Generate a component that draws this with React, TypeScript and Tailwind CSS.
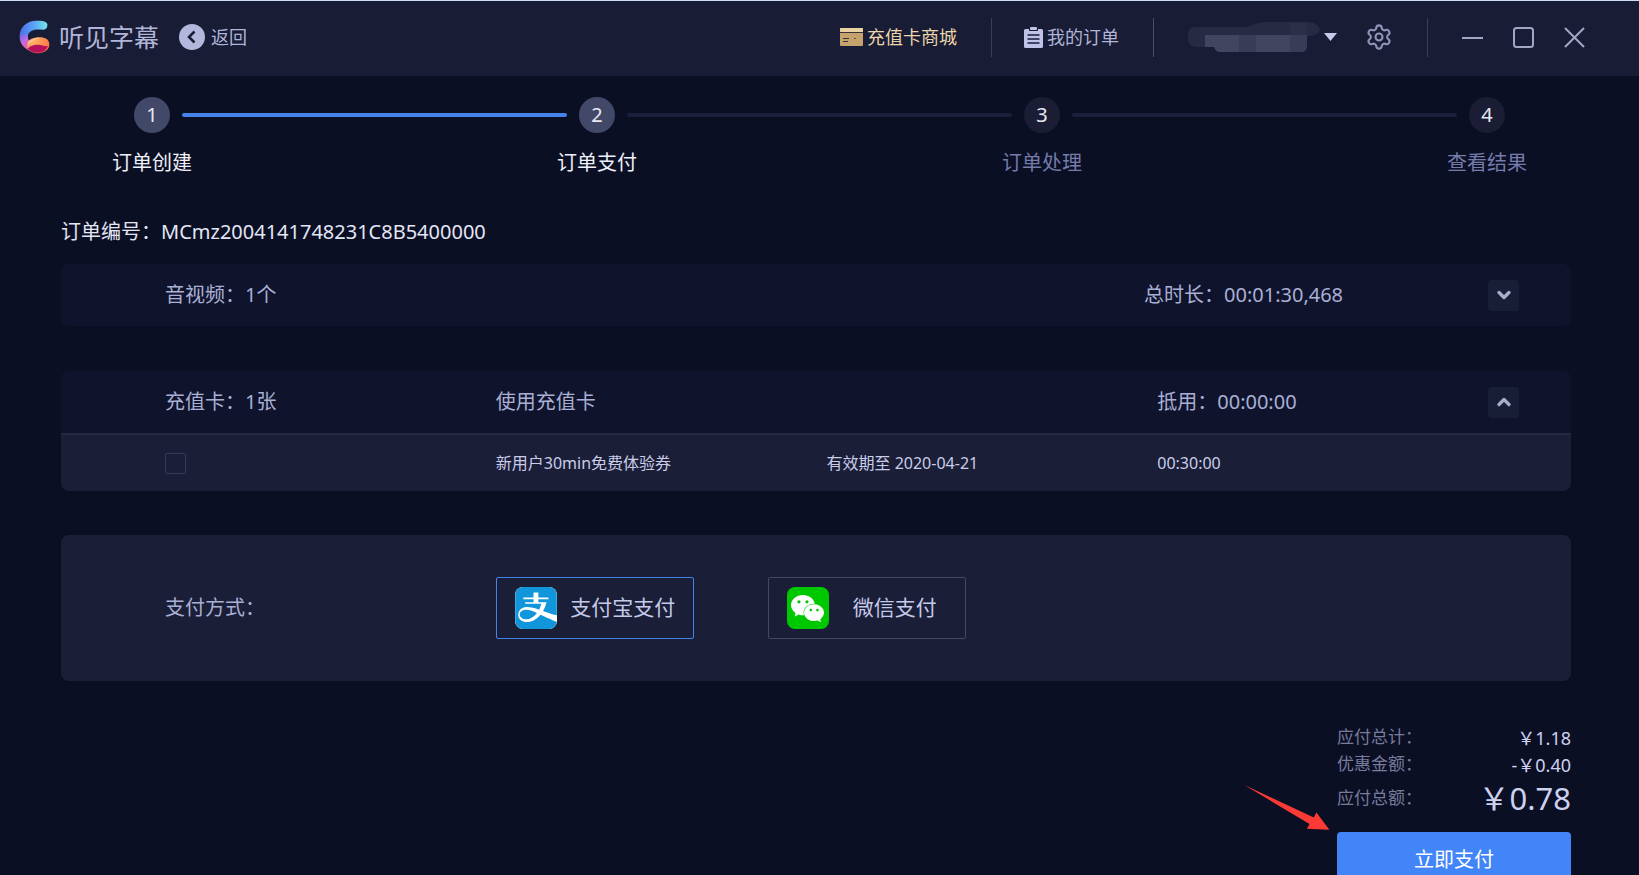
import { useState } from 'react';
import { ChevronDown, ChevronUp, Settings } from 'lucide-react';
import { SiAlipay, SiWechat } from 'react-icons/si';

const steps = [
    { label: '订单创建', active: true },
    { label: '订单支付', active: true },
    { label: '订单处理', active: false },
    { label: '查看结果', active: false },
];

function Logo() {
    return (
        <svg viewBox="56 54 94 102" className="h-[34px] w-[31px]" aria-hidden="true">
            <defs>
                <linearGradient id="logoTop" x1="0" y1="0" x2="1" y2="0">
                    <stop offset="0" stopColor="#4a6fe6" />
                    <stop offset="0.5" stopColor="#5aa0f5" />
                    <stop offset="1" stopColor="#74e8ea" />
                </linearGradient>
                <linearGradient id="logoLeft" x1="0" y1="0" x2="0.4" y2="1">
                    <stop offset="0" stopColor="#a05fe0" stopOpacity="0" />
                    <stop offset="0.5" stopColor="#c26ae0" />
                    <stop offset="1" stopColor="#f05aa8" />
                </linearGradient>
                <linearGradient id="logoRing" x1="0" y1="0" x2="1" y2="0.3">
                    <stop offset="0" stopColor="#f46a9c" />
                    <stop offset="0.35" stopColor="#ffae62" />
                    <stop offset="1" stopColor="#ff7a4a" />
                </linearGradient>
            </defs>
            <path d="M133 58c7 2 10 7 9 13-1 9-7 13-15 12-18-3-36 0-43 13-3 7-1 17 3 24l-2 24c-17-9-27-23-27-41 0-29 23-47 50-47 9 0 18 0 25 2z" fill="url(#logoTop)" />
            <path d="M66 92c4 4 12 6 17 8-1 8 2 15 5 20l4 28c-20-7-32-22-34-40 0-6 3-12 8-16z" fill="url(#logoLeft)" />
            <path d="M80 124c4-12 22-19 42-18 16 1 26 9 26 21 0 17-17 28-37 27-20-1-36-14-31-30z" fill="url(#logoRing)" />
            <path d="M82 141c8-12 24-14 38-12 10 2 18 4 24 4-6 14-20 21-34 20-12 0-22-5-28-12z" fill="#b80f5c" />
            <path d="M84 120c8-10 24-13 37-12-10 3-28 8-38 22z" fill="#ffc983" />
        </svg>
    );
}

function CardIcon() {
    return (
        <svg viewBox="0 0 23 18" className="h-[18px] w-[23px]" aria-hidden="true">
            <rect width="23" height="18" rx="1" fill="#c4a36c" />
            <rect width="23" height="4" rx="1" fill="#ead2a0" />
            <rect y="4" width="23" height="1" fill="#3b3038" />
            <path d="M3 10.500h6M3 13.500h5M14 10.500h1.500" stroke="#3b3038" strokeWidth="1.200" />
        </svg>
    );
}

function OrderIcon() {
    return (
        <svg viewBox="0 0 19 21" className="h-[21px] w-[19px]" aria-hidden="true">
            <path d="M1.500 2H5v1.200Q5 4 6 4h7q1 0 1-.8V2h3.500Q19 2 19 3.500v16q0 1.500-1.500 1.500h-16Q0 21 0 19.500v-16Q0 2 1.500 2z" fill="#c0c3e8" />
            <rect x="6" y="0" width="7" height="3" rx="1" fill="#c0c3e8" />
            <path d="M3.500 8h12M3.500 12h12M3.500 16h12" stroke="#181c34" strokeWidth="1.500" />
        </svg>
    );
}

// account name is masked
function MaskedName() {
    return (
        <svg viewBox="0 0 132 30" className="h-[30px] w-[132px]" aria-hidden="true">
            <path d="M6 5H56C66 4 66 1 78 0H122Q130 1 132 8 130 14 119 14V24Q119 30 113 30H32Q28 30 26 25H8Q0 24 0 17V12Q0 6 6 5z" fill="#262a43" />
            <path d="M17 13H119V24Q119 30 113 30H32Q28 30 26 25H17z" fill="#383c57" />
            <path d="M17 13H51V30H32Q28 30 26 25H17zM68 13H102V30H68z" fill="#41455f" />
            <rect x="102" y="1" width="17" height="12" fill="#2b2f48" />
        </svg>
    );
}

function Header() {
    return (
        <header className="flex h-[76px] shrink-0 items-center justify-between border-t border-[#cfdcf5] bg-[#181c34] pr-[54px] pl-[19px] pb-[3px] text-lg text-[#b0b4d8]">
            <div className="flex items-center">
                <Logo />
                <h1 className="ml-[9px] text-[25px]">听见字幕</h1>
                <button type="button" className="ml-5 flex items-center gap-[6px]">
                    <svg viewBox="0 0 26 26" className="size-[26px]" aria-hidden="true">
                        <circle cx="13" cy="13" r="13" fill="#b3b7dc" />
                        <path d="M15.500 7.500L10 13l5.500 5.500" fill="none" stroke="#181c34" strokeWidth="2.500" />
                    </svg>
                    返回
                </button>
            </div>

            <div className="flex items-center">
                <a href="#mall" className="flex items-center gap-1 text-[#ecd6ac]">
                    <CardIcon />
                    充值卡商城
                </a>
                <span className="mr-8 ml-[34px] h-[39px] w-px bg-[#3a3e57]" />
                <a href="#orders" className="flex items-center gap-1">
                    <OrderIcon />
                    我的订单
                </a>
                <span className="mr-[34px] ml-[34px] h-[39px] w-px bg-[#4a4e68]" />
                <button type="button" aria-label="账户" className="flex items-center gap-1">
                    <MaskedName />
                    <svg viewBox="0 0 13 8" className="h-2 w-[13px]" aria-hidden="true">
                        <path d="M0 0h13L6.500 8z" fill="#c5c8ea" />
                    </svg>
                </button>
                <button type="button" aria-label="设置" className="ml-7">
                    <Settings className="size-7 text-[#9094b6]" strokeWidth={1.8} />
                </button>
                <span className="mx-[34px] h-[39px] w-px bg-[#3a3e57]" />
                <div className="flex items-center gap-[30px] text-[#a3a6c2]">
                    <button type="button" aria-label="最小化">
                        <svg viewBox="0 0 21 21" className="size-[21px]" fill="none" stroke="currentColor" strokeWidth="2">
                            <path d="M0 11h21" />
                        </svg>
                    </button>
                    <button type="button" aria-label="最大化">
                        <svg viewBox="0 0 21 21" className="size-[21px]" fill="none" stroke="currentColor" strokeWidth="2">
                            <rect x="1" y="1" width="19" height="19" rx="2.500" />
                        </svg>
                    </button>
                    <button type="button" aria-label="关闭">
                        <svg viewBox="0 0 21 21" className="size-[21px]" fill="none" stroke="currentColor" strokeWidth="2">
                            <path d="M1 1l19 19M20 1L1 20" />
                        </svg>
                    </button>
                </div>
            </div>
        </header>
    );
}

function Steps() {
    return (
        <ol className="flex px-[134px] pt-[21px] text-xl">
            {steps.map((step, i) => (
                <li key={step.label} className={i < 3 ? 'flex flex-1' : 'flex'}>
                    <div className="flex w-9 flex-col items-center">
                        <span className={`flex size-9 items-center justify-center rounded-full text-[#e6e8f5] ${step.active ? 'bg-[#424868]' : 'bg-[#1a1d33]'}`}>
                            {i + 1}
                        </span>
                        <span className={`mt-4 leading-7 whitespace-nowrap ${step.active ? 'text-[#eef0fa]' : 'text-[#757bab]'}`}>
                            {step.label}
                        </span>
                    </div>
                    {i < 3 && (
                        <span className={`mx-3 mt-4 h-1 flex-1 rounded-full ${i === 0 ? 'bg-[#4583ea]' : 'bg-[#1b1f3c]'}`} />
                    )}
                </li>
            ))}
        </ol>
    );
}

function ToggleButton({ open, onClick, label }: { open: boolean; onClick: () => void; label: string }) {
    return (
        <button
            type="button"
            aria-label={label}
            aria-expanded={open}
            onClick={onClick}
            className="flex size-[31px] items-center justify-center rounded bg-[#191e37] text-[#a9aec8]"
        >
            {open ? <ChevronUp className="size-5" strokeWidth={4} /> : <ChevronDown className="size-5" strokeWidth={4} />}
        </button>
    );
}

export default function App() {
    const [filesOpen, setFilesOpen] = useState(false);
    const [cardsOpen, setCardsOpen] = useState(true);
    const [useCard, setUseCard] = useState(false);
    const [method, setMethod] = useState('alipay');

    return (
        <div className="flex h-screen flex-col overflow-hidden bg-[#0b0f24] font-['Noto_Sans','Noto_Sans_CJK_SC',sans-serif] text-[#a9afd5]">
            <Header />

            <main>
                <Steps />

                <div className="pr-[68px] pl-[61px] text-xl">
                    <p className="mt-[41px] leading-7 text-[#e3e6f5]">订单编号：MCmz2004141748231C8B5400000</p>

                    {/* Files */}
                    <section className="mt-[18px] flex h-[62px] items-center rounded-lg bg-[#0f142c] pr-[52px] pl-[104px]">
                        <div className="flex flex-1">
                            <span className="w-[74%]">音视频：1个</span>
                            <span>总时长：00:01:30,468</span>
                        </div>
                        <ToggleButton open={filesOpen} onClick={() => setFilesOpen(!filesOpen)} label="音视频" />
                    </section>

                    {/* Recharge cards */}
                    <section className="mt-[45px] overflow-hidden rounded-lg bg-[#0f142c]">
                        <div className="flex h-[62px] items-center pr-[52px] pl-[104px]">
                            <div className="grid flex-1 grid-cols-4">
                                <span>充值卡：1张</span>
                                <span className="col-span-2">使用充值卡</span>
                                <span>抵用：00:00:00</span>
                            </div>
                            <ToggleButton open={cardsOpen} onClick={() => setCardsOpen(!cardsOpen)} label="充值卡" />
                        </div>
                        {cardsOpen && (
                            <div className="border-t-2 border-[#262a3e] bg-[#1a1e36] pr-[83px] pl-[104px] text-base text-[#c9cdea]">
                                <div className="grid h-14 grid-cols-4 items-center">
                                    <input
                                        id="card-trial"
                                        type="checkbox"
                                        checked={useCard}
                                        onChange={(e) => setUseCard(e.target.checked)}
                                        className="size-[21px] appearance-none rounded-xs border border-[#323a55] checked:bg-[#4583f8]"
                                    />
                                    <label htmlFor="card-trial">新用户30min免费体验券</label>
                                    <span>有效期至 2020-04-21</span>
                                    <span>00:30:00</span>
                                </div>
                            </div>
                        )}
                    </section>

                    {/* Payment method */}
                    <section className="mt-11 flex h-[146px] items-center rounded-lg bg-[#1a1e36] pr-[83px] pl-[104px]">
                        <span className="w-1/4">支付方式：</span>
                        <div className="flex gap-[74px] text-[21px] text-[#c5c9ea]">
                            <button
                                type="button"
                                aria-pressed={method === 'alipay'}
                                onClick={() => setMethod('alipay')}
                                className={`flex h-[62px] w-[198px] items-center rounded-xs border pr-1 pl-[18px] ${method === 'alipay' ? 'border-[#4583ea]' : 'border-[#454961]'}`}
                            >
                                <span className="flex size-[42px] overflow-hidden rounded-lg bg-white">
                                    <SiAlipay className="size-[42px] text-[#1296db]" />
                                </span>
                                <span className="flex-1">支付宝支付</span>
                            </button>
                            <button
                                type="button"
                                aria-pressed={method === 'wechat'}
                                onClick={() => setMethod('wechat')}
                                className={`flex h-[62px] w-[198px] items-center rounded-xs border pr-1 pl-[18px] ${method === 'wechat' ? 'border-[#4583ea]' : 'border-[#454961]'}`}
                            >
                                <span className="flex size-[42px] items-center justify-center rounded-lg bg-[#00c800]">
                                    <SiWechat className="size-[33px] text-white" />
                                </span>
                                <span className="flex-1">微信支付</span>
                            </button>
                        </div>
                    </section>

                    {/* Total */}
                    <section className="relative mt-[43px] ml-auto w-[234px] text-lg text-[#cdd1f0]">
                        <dl>
                            <div className="flex h-[27px] items-center justify-between">
                                <dt className="text-[17px] text-[#777b9c]">应付总计：</dt>
                                <dd>￥1.18</dd>
                            </div>
                            <div className="flex h-[27px] items-center justify-between">
                                <dt className="text-[17px] text-[#777b9c]">优惠金额：</dt>
                                <dd>-￥0.40</dd>
                            </div>
                            <div className="flex h-10 items-center justify-between">
                                <dt className="text-[17px] text-[#777b9c]">应付总额：</dt>
                                <dd className="text-[31px] leading-10">￥0.78</dd>
                            </div>
                        </dl>
                        <button type="button" className="mt-[14px] h-14 w-full rounded bg-[#4285f8] text-xl text-white">
                            立即支付
                        </button>
                        <svg viewBox="73 254 258 136" className="absolute top-[61px] right-full mr-[7px] h-[45px] w-[86px]" aria-hidden="true">
                            <path d="M73 254L283 352 291 337 330 389 262 386 270 372Z" fill="#fb3a36" />
                        </svg>
                    </section>
                </div>
            </main>
        </div>
    );
}
